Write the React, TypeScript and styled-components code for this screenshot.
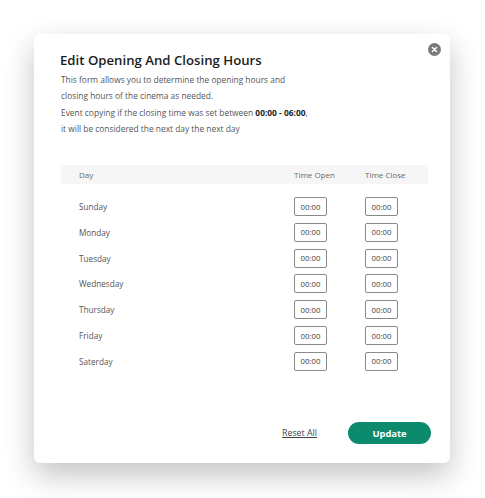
import React from "react";
import styled, { createGlobalStyle } from "styled-components";

const GlobalStyle = createGlobalStyle`
  html, body {
    margin: 0;
    padding: 0;
    background: #ffffff;
    font-family: "Open Sans", "Noto Sans", sans-serif;
  }
`;

const SPage = styled.div`
  width: 485px;
  height: 498px;
  padding: 34px 0 0 34px;
  box-sizing: border-box;
`;

const SModal = styled.div`
  position: relative;
  width: 416px;
  height: 429px;
  box-sizing: border-box;
  padding: 16px 22px 19px 26px;
  background-color: #ffffff;
  border-radius: 6px;
  box-shadow: 0 12px 30px rgba(0, 0, 0, 0.24);
  display: flex;
  flex-direction: column;
`;

const SCloseButton = styled.button`
  position: absolute;
  top: 9px;
  right: 9px;
  width: 13px;
  height: 13px;
  padding: 0;
  border: none;
  border-radius: 50%;
  background-color: #7a7a7a;
  display: flex;
  align-items: center;
  justify-content: center;
  cursor: pointer;
`;

const STitle = styled.h2`
  margin: 0;
  font-size: 13.2px;
  font-weight: 600;
  color: #1c1c1c;
  line-height: 20px;
`;

const SDescription = styled.p`
  margin: 2px 0 0 1px;
  font-size: 8.4px;
  line-height: 16.4px;
  color: #555555;

  b {
    color: #1c1c1c;
    font-weight: 700;
  }
`;

const STable = styled.div`
  margin-top: 27px;
  margin-left: 1px;
  display: flex;
  flex-direction: column;
`;

const SGridRow = styled.div<{ $head?: boolean }>`
  display: grid;
  grid-template-columns: 233px 71px 63px;
  align-items: center;
  height: ${(p) => (p.$head ? "19px" : "25.8px")};
  background-color: ${(p) => (p.$head ? "#f6f6f6" : "transparent")};
  margin-bottom: ${(p) => (p.$head ? "10px" : "0")};
  font-size: ${(p) => (p.$head ? "8px" : "8.2px")};
  color: ${(p) => (p.$head ? "#6a6a6a" : "#555555")};

  .day {
    padding-left: 18px;
  }
`;

const STimeInput = styled.input`
  width: 33px;
  height: 19px;
  box-sizing: border-box;
  padding: 0;
  border: 1px solid #8a8a8a;
  border-radius: 2px;
  background: #ffffff;
  font-family: inherit;
  font-size: 7.8px;
  color: #444444;
  text-align: center;
  outline: none;
`;

const SFooter = styled.div`
  margin-top: auto;
  display: flex;
  justify-content: flex-end;
  align-items: center;
  gap: 31px;
`;

const SResetLink = styled.a`
  font-size: 8.8px;
  color: #444444;
  text-decoration: underline;
  cursor: pointer;
`;

const SUpdateButton = styled.button`
  width: 83px;
  height: 22px;
  margin-right: -3px;
  border: none;
  border-radius: 11px;
  background-color: #0b8a6e;
  color: #ffffff;
  font-family: inherit;
  font-size: 9.4px;
  font-weight: 700;
  cursor: pointer;
`;

const days = [
  "Sunday",
  "Monday",
  "Tuesday",
  "Wednesday",
  "Thursday",
  "Friday",
  "Saterday",
];

const App = () => {
  return (
    <SPage>
      <GlobalStyle />
      <SModal>
        <SCloseButton aria-label="close">
          <svg width="7" height="7" viewBox="0 0 10 10">
            <path
              d="M2 2 L8 8 M8 2 L2 8"
              stroke="#ffffff"
              strokeWidth="2"
              strokeLinecap="round"
            />
          </svg>
        </SCloseButton>
        <STitle>Edit Opening And Closing Hours</STitle>
        <SDescription>
          This form allows you to determine the opening hours and
          <br />
          closing hours of the cinema as needed.
          <br />
          Event copying if the closing time was set between{" "}
          <b>00:00 - 06:00</b>,
          <br />
          it will be considered the next day the next day
        </SDescription>
        <STable>
          <SGridRow $head>
            <span className="day">Day</span>
            <span>Time Open</span>
            <span>Time Close</span>
          </SGridRow>
          {days.map((day) => (
            <SGridRow key={day}>
              <span className="day">{day}</span>
              <span>
                <STimeInput defaultValue="00:00" />
              </span>
              <span>
                <STimeInput defaultValue="00:00" />
              </span>
            </SGridRow>
          ))}
        </STable>
        <SFooter>
          <SResetLink>Reset All</SResetLink>
          <SUpdateButton>Update</SUpdateButton>
        </SFooter>
      </SModal>
    </SPage>
  );
};

export default App;
